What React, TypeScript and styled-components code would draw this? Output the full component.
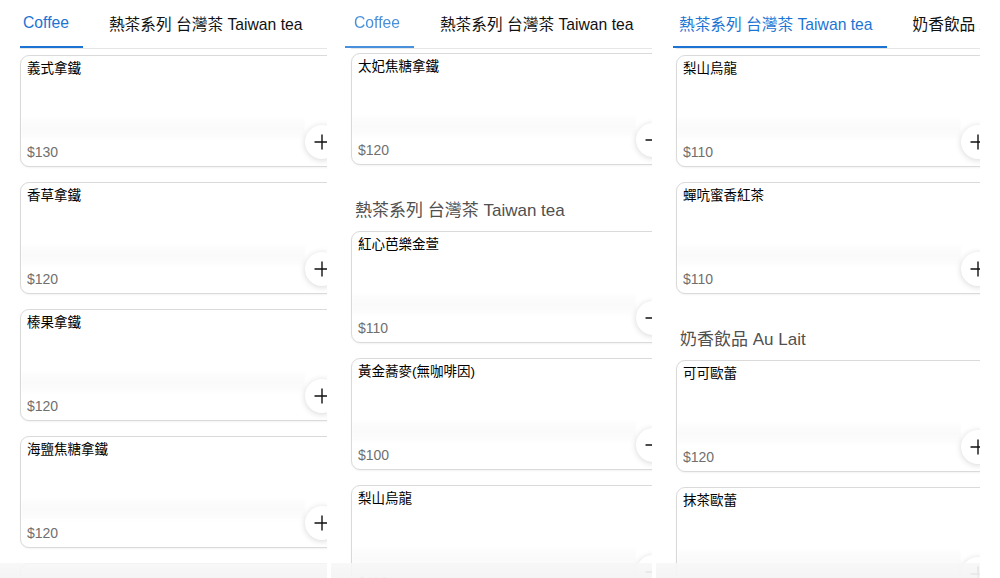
import React from "react";
import styled, { createGlobalStyle } from "styled-components";
import { Plus } from "lucide-react";

const GlobalStyle = createGlobalStyle`
  html, body { margin: 0; padding: 0; background: #fff; }
  body {
    font-family: "Liberation Sans", "Noto Sans CJK TC", sans-serif;
    -webkit-font-smoothing: antialiased;
  }
`;

const BLUE = "#1b74d4";

const Page = styled.div`
  display: flex;
  width: 1000px;
  height: 578px;
  overflow: hidden;
  background: #fff;
`;

const Panel = styled.section<{ $width: number; $gap: number }>`
  position: relative;
  flex: 0 0 ${(p) => p.$width}px;
  margin-left: ${(p) => p.$gap}px;
  height: 578px;
  overflow: hidden;
  display: flex;
  flex-direction: column;
  background: #fff;
`;

const TabBar = styled.nav`
  display: flex;
  flex-shrink: 0;
  height: 48px;
  margin-left: 20px;
  border-bottom: 1px solid #e6e6e6;
  white-space: nowrap;
`;

const Tab = styled.div<{ $active: boolean; $inkLeft: number; $faded?: boolean }>`
  position: relative;
  flex-shrink: 0;
  display: flex;
  align-items: center;
  padding: 0 14px 2px 3px;
  margin-right: 23px;
  font-size: 15.7px;
  color: ${(p) => (p.$active ? BLUE : "#111")};
  opacity: ${(p) => (p.$faded ? 0.8 : 1)};

  &::after {
    content: "";
    display: ${(p) => (p.$active ? "block" : "none")};
    position: absolute;
    left: ${(p) => -p.$inkLeft}px;
    right: 0;
    bottom: 0;
    height: 2px;
    background: ${BLUE};
  }
`;

const List = styled.div<{ $top: number }>`
  display: flex;
  flex-direction: column;
  padding: ${(p) => p.$top}px 0 0 20px;
`;

const SectionTitle = styled.h2`
  margin: 19px 0 8px;
  padding-left: 4px;
  font-size: 17px;
  line-height: 24px;
  font-weight: 400;
  color: #505050;
  white-space: nowrap;
`;

const Card = styled.article`
  box-sizing: border-box;
  flex-shrink: 0;
  width: 340px;
  height: 112px;
  margin-bottom: 15px;
  padding: 3px 20px 5px 6px;
  border: 1px solid #dadada;
  border-radius: 9px;
  background: #fff;
  box-shadow: 0 1px 2px rgba(0, 0, 0, 0.05);
  display: flex;
  flex-direction: column;
`;

const Name = styled.h3`
  flex: 1;
  margin: 0;
  font-size: 13.5px;
  line-height: 20px;
  font-weight: 400;
  color: #000;
`;

const Footer = styled.div`
  display: flex;
  align-items: flex-end;
`;

const PriceColumn = styled.div`
  flex: 1;
  display: flex;
  flex-direction: column;
`;

const Haze = styled.div`
  height: 21px;
  margin: 0 0 4px -6px;
  background: linear-gradient(
    to bottom,
    rgba(0, 0, 0, 0.008),
    rgba(0, 0, 0, 0.02) 50%,
    rgba(0, 0, 0, 0.008)
  );
  filter: blur(1px);
`;

const Price = styled.span`
  font-size: 14px;
  line-height: 18px;
  color: #6f6f6f;
`;

const AddButton = styled.button`
  flex-shrink: 0;
  width: 34px;
  height: 34px;
  margin: 0 0 2px;
  padding: 0;
  border: none;
  border-radius: 50%;
  background: #fff;
  box-shadow: 0 1px 6px rgba(0, 0, 0, 0.16);
  display: flex;
  align-items: center;
  justify-content: center;
  color: #111;
`;

const BottomFade = styled.div`
  position: absolute;
  left: 0;
  right: 0;
  bottom: 0;
  height: 15px;
  background: linear-gradient(
    to bottom,
    rgba(247, 247, 247, 0.88),
    rgba(244, 244, 244, 0.96)
  );
`;

type Item =
  | { kind: "card"; name: string; price: string }
  | { kind: "title"; text: string };

type PanelData = {
  width: number;
  gap: number;
  top: number;
  tabs: { label: string; active: boolean; inkLeft: number; faded?: boolean }[];
  items: Item[];
};

const panels: PanelData[] = [
  {
    width: 327,
    gap: 0,
    top: 6,
    tabs: [
      { label: "Coffee", active: true, inkLeft: 0 },
      { label: "熱茶系列 台灣茶 Taiwan tea", active: false, inkLeft: 0 },
      { label: "奶香飲品 Au Lait", active: false, inkLeft: 0 },
    ],
    items: [
      { kind: "card", name: "義式拿鐵", price: "$130" },
      { kind: "card", name: "香草拿鐵", price: "$120" },
      { kind: "card", name: "榛果拿鐵", price: "$120" },
      { kind: "card", name: "海鹽焦糖拿鐵", price: "$120" },
      { kind: "card", name: "", price: "$120" },
    ],
  },
  {
    width: 321,
    gap: 4,
    top: 4,
    tabs: [
      { label: "Coffee", active: true, inkLeft: 6, faded: true },
      { label: "熱茶系列 台灣茶 Taiwan tea", active: false, inkLeft: 0 },
      { label: "奶香飲品 Au Lait", active: false, inkLeft: 0 },
    ],
    items: [
      { kind: "card", name: "太妃焦糖拿鐵", price: "$120" },
      { kind: "title", text: "熱茶系列 台灣茶 Taiwan tea" },
      { kind: "card", name: "紅心芭樂金萱", price: "$110" },
      { kind: "card", name: "黃金蕎麥(無咖啡因)", price: "$100" },
      { kind: "card", name: "梨山烏龍", price: "$110" },
    ],
  },
  {
    width: 324,
    gap: 4,
    top: 6,
    tabs: [
      { label: "熱茶系列 台灣茶 Taiwan tea", active: true, inkLeft: 3 },
      { label: "奶香飲品 Au Lait", active: false, inkLeft: 0 },
    ],
    items: [
      { kind: "card", name: "梨山烏龍", price: "$110" },
      { kind: "card", name: "蟬吭蜜香紅茶", price: "$110" },
      { kind: "title", text: "奶香飲品 Au Lait" },
      { kind: "card", name: "可可歐蕾", price: "$120" },
      { kind: "card", name: "抹茶歐蕾", price: "$120" },
    ],
  },
];

function MenuCard({ name, price }: { name: string; price: string }) {
  return (
    <Card>
      <Name>{name}</Name>
      <Footer>
        <PriceColumn>
          <Haze />
          <Price>{price}</Price>
        </PriceColumn>
        <AddButton aria-label="add">
          <Plus size={24} strokeWidth={1.4} />
        </AddButton>
      </Footer>
    </Card>
  );
}

export default function App() {
  return (
    <>
      <GlobalStyle />
      <Page>
        {panels.map((p, i) => (
          <Panel key={i} $width={p.width} $gap={p.gap}>
            <TabBar>
              {p.tabs.map((t) => (
                <Tab key={t.label} $active={t.active} $inkLeft={t.inkLeft} $faded={t.faded}>
                  {t.label}
                </Tab>
              ))}
            </TabBar>
            <List $top={p.top}>
              {p.items.map((it, j) =>
                it.kind === "card" ? (
                  <MenuCard key={j} name={it.name} price={it.price} />
                ) : (
                  <SectionTitle key={j}>{it.text}</SectionTitle>
                )
              )}
            </List>
            <BottomFade />
          </Panel>
        ))}
      </Page>
    </>
  );
}
